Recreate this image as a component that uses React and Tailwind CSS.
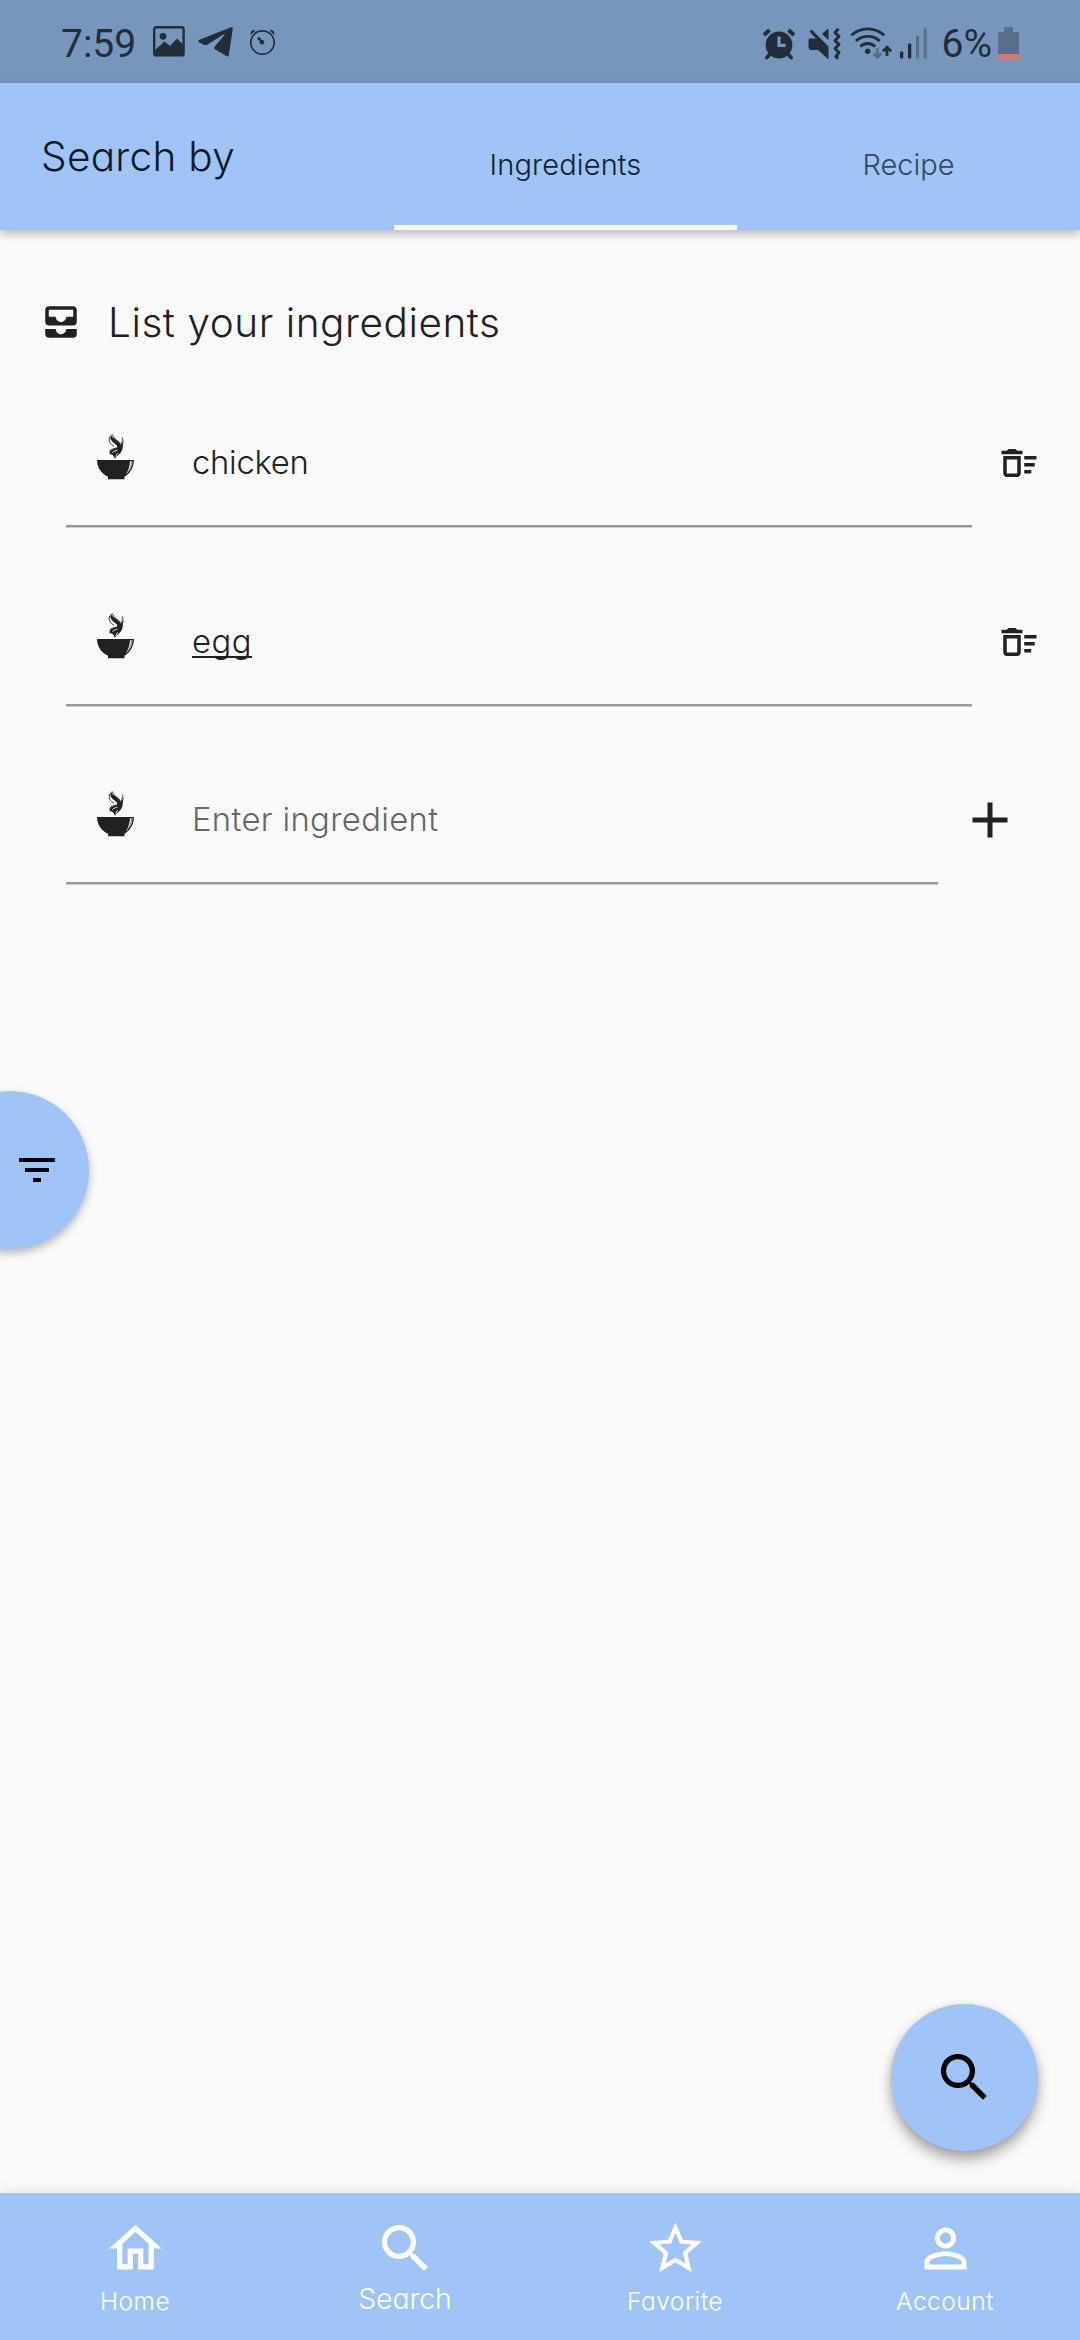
import {
  MdAllInbox,
  MdOutlineDeleteSweep,
  MdAdd,
  MdFilterList,
  MdSearch,
  MdStarBorder,
} from "react-icons/md";

const INK = "#222d3a";
const DIM = "#586e8c";

function PictureIcon() {
  return (
    <svg className="ml-[17px] h-8 w-8" viewBox="0 0 32 32" fill="none">
      <rect x="1.2" y="1.2" width="29.4" height="28.2" rx="2" stroke={INK} strokeWidth="2.4" />
      <circle cx="10" cy="10.3" r="3.4" fill={INK} />
      <path d="M2 24l9.5-8.5 5.5 4.5 7-7.5 6.5 6.5v10H2z" fill={INK} />
    </svg>
  );
}

function TelegramIcon() {
  return (
    <svg className="ml-[13px] h-8 w-9" viewBox="0 0 36 32">
      <path
        d="M.8 16.2c-.8-.7-.6-1.8.5-2.4L33 1.3c1.2-.4 1.9.2 1.8 1.4l-4 26.2c-.2 1.4-1.3 1.9-2.5 1.2l-11-6.6c-1.2-.8-1.4-2-.5-3l9.5-11.3c.6-.8 0-1.3-.9-.8L9.6 18.5c-1 .6-1.9.7-3 .4z"
        fill={INK}
      />
    </svg>
  );
}

function ClockIcon() {
  return (
    <svg className="ml-[14px] h-7 w-7" viewBox="0 0 28 28" fill="none" stroke={INK}>
      <circle cx="14.5" cy="14.5" r="11.7" strokeWidth="1.7" />
      <path d="M10.7 10.2L14 14" strokeWidth="2" strokeLinecap="round" />
      <circle cx="11" cy="10.7" r="1.5" fill={INK} stroke="none" />
      <circle cx="14" cy="14.3" r="2.3" fill={INK} stroke="none" />
      <path d="M2.8 7C2 4.5 3.5 1.5 7.5 2.2zM26.2 7c.8-2.5-.7-5.5-4.7-4.8z" fill={INK} stroke="none" />
    </svg>
  );
}

function AlarmIcon() {
  return (
    <svg className="h-9 w-9" viewBox="0 0 36 36" fill="none">
      <circle cx="18" cy="19" r="13.4" fill={INK} />
      <path d="M3 9l5.5-5M33 9l-5.5-5" stroke={INK} strokeWidth="4" />
      <path d="M9 28l-3.2 3.6M27 28l3.2 3.6" stroke={INK} strokeWidth="3.6" strokeLinecap="round" />
      <path d="M18 10.5v8.8h6.6" stroke="#7895bb" strokeWidth="3.2" />
    </svg>
  );
}

function MuteIcon() {
  return (
    <svg className="ml-2.5 h-9 w-9" viewBox="0 0 36 36" fill="none">
      <path d="M2.5 12.5h6.5L2.500 5.500 4.500 3.600 21.500 20.500v13L11.200 24H4.500c-2 0-3-1-3-3v-6c0-1.300 0-2.500 1-2.500z" fill={INK} />
      <path d="M21.5 2.5v11.8L15 7.8z" fill={INK} />
      <path d="M31.5 2.8l-3.500 3.700 4 4-4 4 4 4-4 4 4 4-3.200 4.200 2.400 2" stroke={INK} strokeWidth="3" strokeLinejoin="round" />
    </svg>
  );
}

function WifiIcon() {
  return (
    <svg className="ml-1.5 h-9 w-11" viewBox="0 0 44 36" fill="none">
      <g stroke={INK} strokeWidth="2.8">
        <path d="M2.3 9.3c9.5-8.6 23.5-8.6 33 0" />
        <path d="M6.8 15c7-6.3 17.2-6.3 24 0" />
        <path d="M11.2 20.5c4.5-4 10.5-4 15 0" />
      </g>
      <circle cx="18.7" cy="25.2" r="2.7" fill={INK} />
      <path d="M28.5 22v9M24.5 27.5l4 4 4-4" stroke={DIM} strokeWidth="2.6" />
      <path d="M38 30v-8M33.9 25.3l4.1-4.1 4.1 4.1" stroke={INK} strokeWidth="2.7" />
    </svg>
  );
}

function SignalIcon() {
  return (
    <svg className="ml-[7px] h-9 w-7" viewBox="0 0 28 36">
      <rect x="0" y="25.5" width="3.3" height="7" rx="1" fill={INK} />
      <rect x="8" y="17.5" width="3.3" height="15" rx="1" fill={INK} />
      <rect x="16" y="10" width="3.1" height="22.5" rx="1" fill={DIM} />
      <rect x="23.7" y="2.6" width="3.1" height="29.9" rx="1" fill={DIM} />
    </svg>
  );
}

function BatteryIcon() {
  return (
    <svg className="ml-1.5 h-9 w-[21px]" viewBox="0 0 21 36">
      <path d="M6 2.500c0-1 .5-1.500 1.500-1.500h6c1 0 1.500.5 1.500 1.500V6h6v22H0V6h6z" fill={DIM} />
      <path d="M0 28h21v3.500c0 1.300-.5 2-1.800 2H1.800C.5 33.500 0 32.800 0 31.500z" fill="#d2796a" />
    </svg>
  );
}

function BowlIcon() {
  return (
    <svg className="mb-3 ml-6 h-14 w-14 shrink-0" viewBox="0 0 56 56">
      <path d="M7 32h37c-.2 8-4.3 13.5-9.5 16.8v2.5H18v-2.500C11.500 46 7.200 40 7 32z" fill="#212121" />
      <path d="M40 33.200h2.600c-.3 5.300-2.600 10-6.800 13.200 2.600-4 4-8.300 4.200-13.200z" fill="#fafafa" />
      <path d="M41.600 33.200c-.2 4.600-1.600 8.600-3.800 11.300" fill="none" stroke="#212121" strokeWidth=".6" />
      <path
        d="M24.800 30.800c-.4-1.900-1.300-3-2.800-4.300l-2.300-.2c-.5-1.500.3-3.200 1.800-4.200 1.700-1.100 4.300-1 5.500-2.500 1-1.500-1-3-3-4.600-3-2.400-4.700-4.500-3-8.800.6 3 3 4.200 5.800 6.300 2.200 1.700 3.200 3 3.900 4.300 1-1.400 1-3 .7-5 1.900 3.700 2 8.200.2 11.500-1.500 2.700-4.800 4.500-6.800 7.500z"
        fill="#212121"
      />
      <path
        d="M22.300 6.500c1.200 4.800 6 5.800 8.300 9.500M19.600 9c-1.200 4.500.5 7 4.500 9.300M32 9.500c1.600 3 1.300 6-.3 8.500M19.500 23.500c1.500-2.300 4.500-3 7-3.500"
        fill="none"
        stroke="#212121"
        strokeWidth=".9"
      />
      <path d="M22.300 24.600c1.600-1.600 3.600-1.800 5.200-2.500M26 29c.2-1.800.8-2.800 1.800-3.800" fill="none" stroke="#fafafa" strokeWidth=".9" />
    </svg>
  );
}

function HomeIcon() {
  return (
    <svg className="h-[63px] w-[63px]" viewBox="0 0 24 24" fill="currentColor">
      <path d="M12 5.690l5 4.500V18h-2v-6H9v6H7v-7.810l5-4.500M12 3L2 12h3v8h6v-6h2v6h6v-8h3L12 3z" />
    </svg>
  );
}

function PersonIcon() {
  return (
    <svg className="h-[63px] w-[63px]" viewBox="0 0 24 24" fill="currentColor">
      <path d="M12 5.900c1.160 0 2.100.94 2.100 2.100s-.94 2.100-2.100 2.100S9.900 9.160 9.900 8s.94-2.100 2.100-2.100m0 9c2.970 0 6.100 1.460 6.100 2.100v1.100H5.900V17c0-.64 3.130-2.100 6.100-2.100M12 4C9.790 4 8 5.790 8 8s1.790 4 4 4 4-1.790 4-4-1.790-4-4-4zm0 9c-2.670 0-8 1.340-8 4v3h16v-3c0-2.660-5.330-4-8-4z" />
    </svg>
  );
}

function StatusBar() {
  return (
    <div className="flex h-[83px] items-center bg-[#7895bb] pl-[61px] pr-[61px] font-['Roboto',sans-serif] text-[39px] font-normal leading-none text-[#222d3a]">
      <span className="pt-1.5">7:59</span>
      <PictureIcon />
      <TelegramIcon />
      <ClockIcon />
      <div className="ml-auto flex items-center pt-1">
        <AlarmIcon />
        <MuteIcon />
        <WifiIcon />
        <SignalIcon />
        <span className="ml-3.5 pt-0.5">6%</span>
        <BatteryIcon />
      </div>
    </div>
  );
}

function Header() {
  return (
    <header className="relative z-10 flex h-[147px] items-stretch bg-[#a0c4f8] shadow-[0_4px_9px_rgba(0,0,0,0.26)]">
      <h1 className="flex w-[394px] items-center pl-[41px] pt-0.5 text-[40.5px] tracking-[0.3px] text-[#0f1a28]">Search by</h1>
      <nav className="grid flex-1 grid-cols-2 text-[29px]">
        <div className="flex items-center justify-center border-b-[5px] border-white pt-[21px] tracking-[0.15px] text-[#132030]">
          Ingredients
        </div>
        <div className="flex items-center justify-center pt-4 text-[#34475f]">Recipe</div>
      </nav>
    </header>
  );
}

function Field({ children }) {
  return (
    <div className="flex h-[131px] flex-1 items-center border-b-2 border-[#999999] pt-[3px] text-[32.8px] text-[#212121] shadow-[0_1px_0_#cccccc]">
      <BowlIcon />
      <span className="ml-[46px] leading-10">{children}</span>
    </div>
  );
}

function Ingredients() {
  return (
    <section className="pl-[66px]">
      <div className="flex h-[179px] items-start">
        <Field>
          <span className="tracking-[-0.3px]">chicken</span>
        </Field>
        <MdOutlineDeleteSweep className="ml-[26px] mr-[40px] mt-[46px] text-[42px] text-[#212121]" />
      </div>
      <div className="flex h-[178px] items-start">
        <Field>
          <span className="tracking-[0.5px] underline decoration-2 underline-offset-[3px] [text-decoration-skip-ink:none]">egg</span>
        </Field>
        <MdOutlineDeleteSweep className="ml-[26px] mr-[40px] mt-[46px] text-[42px] text-[#212121]" />
      </div>
      <div className="flex h-[178px] items-start">
        <Field>
          <span className="tracking-[0.35px] text-[#666666]">Enter ingredient</span>
        </Field>
        <MdAdd className="ml-[21.5px] mr-[60.5px] mt-[36.5px] text-[60px] text-[#212121]" />
      </div>
    </section>
  );
}

function NavItem({ icon, label, active }) {
  return (
    <div className="flex flex-col items-center pt-6">
      {icon}
      <span
        className={
          active
            ? "mt-[3px] text-[28.5px] leading-[32px] tracking-[-0.1px]"
            : "mt-[5px] text-[24.5px] leading-[32px] tracking-[0.5px]"
        }
      >
        {label}
      </span>
    </div>
  );
}

export default function App() {
  return (
    <div className="relative flex h-[2340px] w-[1080px] flex-col overflow-hidden bg-[#fafafa] font-['Inter',sans-serif] font-light [font-feature-settings:'cv11']">
      <StatusBar />
      <Header />
      <main className="flex-1">
        <div className="flex h-[166px] items-center pl-[39.5px] pt-[19px]">
          <MdAllInbox className="mb-0.5 text-[42px] text-[#212121]" />
          <h2 className="ml-[26.5px] text-[40.5px] leading-[48px] tracking-[0.55px] text-[#212121]">List your ingredients</h2>
        </div>
        <Ingredients />
      </main>

      <button className="absolute left-[-69px] top-[1091px] flex h-[158px] w-[158px] items-center rounded-full bg-[#a0c4f8] pl-[82px] text-black shadow-[0_4px_8px_rgba(0,0,0,0.28)]">
        <MdFilterList className="text-[48px]" />
      </button>
      <button className="absolute left-[891px] top-[2004px] flex h-[147px] w-[147px] items-center justify-center rounded-full bg-[#a0c4f8] text-black shadow-[0_9px_14px_rgba(0,0,0,0.3),0_2px_10px_rgba(0,0,0,0.12)]">
        <MdSearch className="text-[63px]" />
      </button>

      <nav className="grid h-[147px] grid-cols-4 bg-[#a0c4f8] text-white shadow-[0_-1px_12px_rgba(0,0,0,0.1)]">
        <NavItem icon={<HomeIcon />} label="Home" />
        <NavItem icon={<MdSearch className="text-[63px]" />} label="Search" active />
        <NavItem icon={<MdStarBorder className="text-[63px]" />} label="Favorite" />
        <NavItem icon={<PersonIcon />} label="Account" />
      </nav>
    </div>
  );
}
